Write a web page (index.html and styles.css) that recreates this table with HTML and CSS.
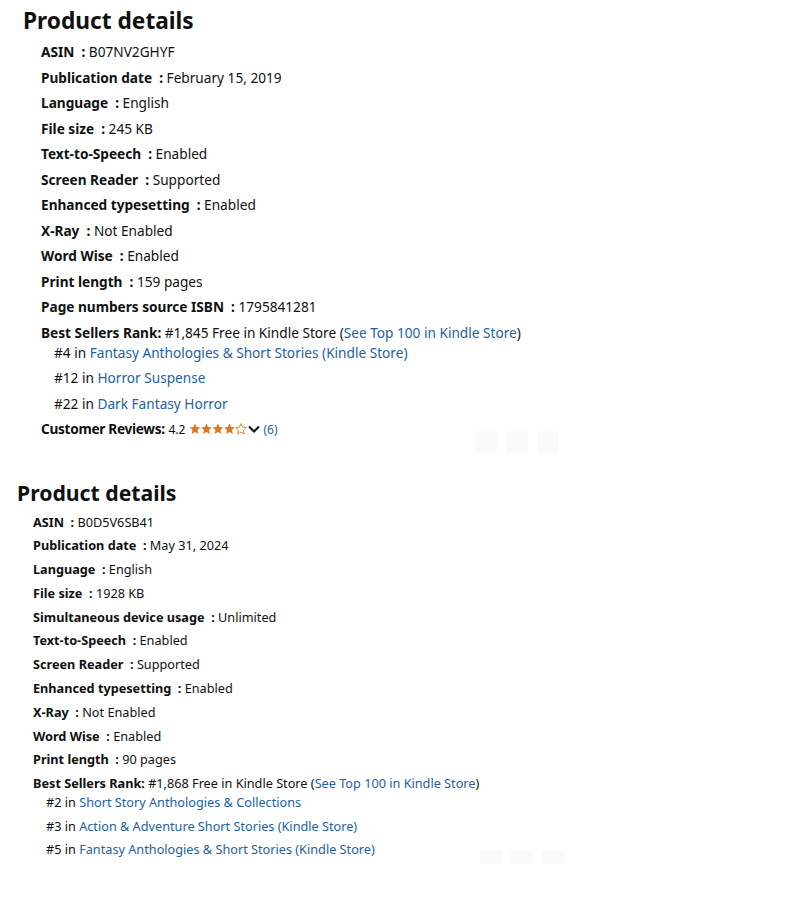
FILE: index.html
```html
<!DOCTYPE html>
<html>
<head>
<meta charset="utf-8">
<link rel="stylesheet" href="styles.css">
</head>
<body>
<section class="pd pd-a">
  <h2 class="pd-title">Product details</h2>
  <ul class="pd-list">
    <li><span class="k">ASIN &nbsp;: </span><span>B07NV2GHYF</span></li>
    <li><span class="k">Publication date &nbsp;: </span><span>February 15, 2019</span></li>
    <li><span class="k">Language &nbsp;: </span><span>English</span></li>
    <li><span class="k">File size &nbsp;: </span><span>245 KB</span></li>
    <li><span class="k">Text-to-Speech &nbsp;: </span><span>Enabled</span></li>
    <li><span class="k">Screen Reader &nbsp;: </span><span>Supported</span></li>
    <li><span class="k">Enhanced typesetting &nbsp;: </span><span>Enabled</span></li>
    <li><span class="k">X-Ray &nbsp;: </span><span>Not Enabled</span></li>
    <li><span class="k">Word Wise &nbsp;: </span><span>Enabled</span></li>
    <li><span class="k">Print length &nbsp;: </span><span>159 pages</span></li>
    <li><span class="k">Page numbers source ISBN &nbsp;: </span><span>1795841281</span></li>
    <li class="rank">
      <div><span class="k">Best Sellers Rank:</span> #1,845 Free in Kindle Store (<a href="#">See Top 100 in Kindle Store</a>)</div>
      <ul class="sub">
        <li class="first">#4 in <a href="#">Fantasy Anthologies &amp; Short Stories (Kindle Store)</a></li>
        <li>#12 in <a href="#">Horror Suspense</a></li>
        <li>#22 in <a href="#">Dark Fantasy Horror</a></li>
      </ul>
    </li>
    <li class="reviews"><span class="k rv">Customer Reviews:</span> <span class="small">4.2</span>
      <span class="stars"><svg width="58" height="12" viewBox="0 0 58 12">
        <defs>
          <path id="st" d="M6 0.6l1.6 3.5 3.8 0.4-2.9 2.6 0.8 3.8L6 9 2.7 10.9l0.8-3.8L0.6 4.5l3.8-0.4z"/>
        </defs>
        <use href="#st" x="0" fill="#DE7921"/>
        <use href="#st" x="11.5" fill="#DE7921"/>
        <use href="#st" x="23" fill="#DE7921"/>
        <use href="#st" x="34.5" fill="#DE7921"/>
        <use href="#st" x="46" fill="none" stroke="#DE7921" stroke-width="0.9"/>
      </svg></span><svg class="chev" width="12" height="9" viewBox="0 0 12 9"><path d="M1 1.5l5 5 5-5" fill="none" stroke="#0F1111" stroke-width="2"/></svg> <a class="small" href="#">(6)</a>
    </li>
  </ul>
  <div class="ghost g1"><span></span><span></span><span></span></div>
</section>

<section class="pd pd-b">
  <h2 class="pd-title">Product details</h2>
  <ul class="pd-list">
    <li><span class="k">ASIN &nbsp;: </span><span>B0D5V6SB41</span></li>
    <li><span class="k">Publication date &nbsp;: </span><span>May 31, 2024</span></li>
    <li><span class="k">Language &nbsp;: </span><span>English</span></li>
    <li><span class="k">File size &nbsp;: </span><span>1928 KB</span></li>
    <li><span class="k">Simultaneous device usage &nbsp;: </span><span>Unlimited</span></li>
    <li><span class="k">Text-to-Speech &nbsp;: </span><span>Enabled</span></li>
    <li><span class="k">Screen Reader &nbsp;: </span><span>Supported</span></li>
    <li><span class="k">Enhanced typesetting &nbsp;: </span><span>Enabled</span></li>
    <li><span class="k">X-Ray &nbsp;: </span><span>Not Enabled</span></li>
    <li><span class="k">Word Wise &nbsp;: </span><span>Enabled</span></li>
    <li><span class="k">Print length &nbsp;: </span><span>90 pages</span></li>
    <li class="rank">
      <div><span class="k">Best Sellers Rank:</span> #1,868 Free in Kindle Store (<a href="#">See Top 100 in Kindle Store</a>)</div>
      <ul class="sub">
        <li class="first">#2 in <a href="#">Short Story Anthologies &amp; Collections</a></li>
        <li>#3 in <a href="#">Action &amp; Adventure Short Stories (Kindle Store)</a></li>
        <li>#5 in <a href="#">Fantasy Anthologies &amp; Short Stories (Kindle Store)</a></li>
      </ul>
    </li>
  </ul>
  <div class="ghost g2"><span></span><span></span><span></span></div>
</section>
</body>
</html>
```
FILE: styles.css
```css
html, body { margin: 0; padding: 0; background: #fff; }
body {
  font-family: "Noto Sans", "Open Sans", sans-serif;
  color: #0F1111;
}
a { color: #2162A1; text-decoration: none; }
ul { list-style: none; margin: 0; padding: 0; }
.pd { position: relative; }
.pd-title { margin: 0; font-weight: 700; }
.k { font-weight: 700; }

.pd-a { padding: 5px 0 0 23px; font-size: 13.65px; }
.pd-a .pd-title { font-size: 22.7px; line-height: 32px; }
.pd-a .pd-list { padding: 5px 0 0 18px; }
.pd-a .pd-list > li { line-height: 20px; margin-bottom: 5.5px; }
.pd-a .sub { padding-left: 13px; }
.pd-a .sub li { line-height: 20px; margin-top: 5.5px; }
.pd-a .sub li.first { margin-top: 0; }

.pd-b { padding: 32px 0 0 17px; font-size: 12.7px; }
.pd-b .pd-title { font-size: 21.2px; line-height: 30px; }
.pd-b .pd-list { padding: 5px 0 0 16px; }
.pd-b .pd-list > li { line-height: 18px; margin-bottom: 5.8px; }
.pd-b .sub { padding-left: 13px; }
.pd-b .sub li { line-height: 18px; margin-top: 5.5px; }
.pd-b .sub li.first { margin-top: 1px; }

.rv { letter-spacing: -0.3px; }
.small { font-size: 12px; }
.stars { display: inline-block; vertical-align: -1px; }
.chev { vertical-align: 0; margin-left: 1px; }

.ghost { position: absolute; display: flex; gap: 9px; }
.ghost span { width: 22px; height: 22px; background: #fafafa; border-radius: 3px; }
.g1 { left: 475px; top: 431px; }
.g2 { left: 480px; top: 404px; }
```
